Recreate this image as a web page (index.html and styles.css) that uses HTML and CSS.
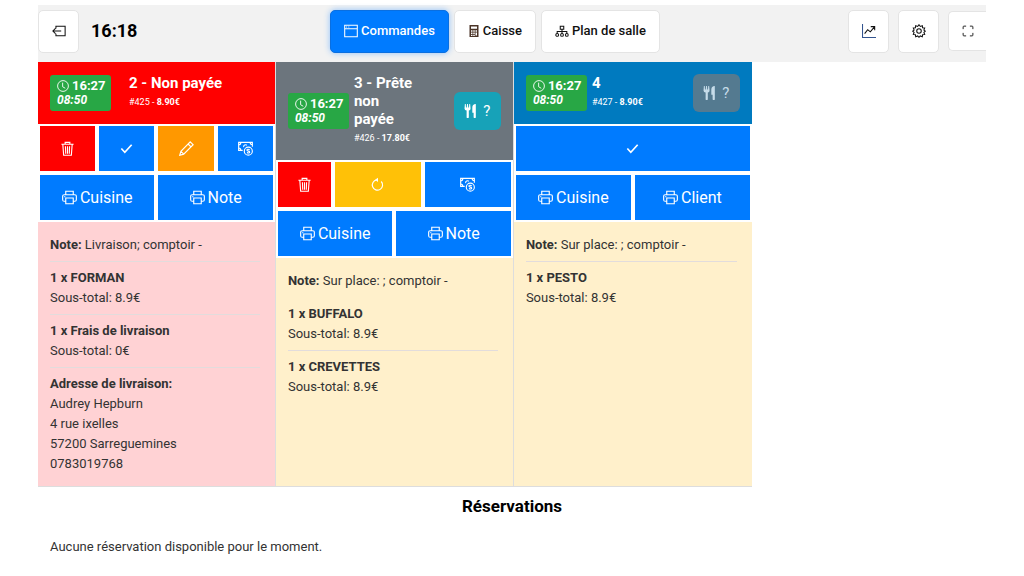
FILE: index.html
```html
<!DOCTYPE html>
<html lang="fr">
<head>
<meta charset="utf-8">
<meta name="viewport" content="width=device-width, initial-scale=1">
<title>Commandes</title>
<link rel="stylesheet" href="styles.css">
</head>
<body>
<svg class="sprite" aria-hidden="true">
  <symbol id="exit" viewBox="0 0 16 16"><path d="M4.500 5V2.500h10.500v11H4.500V11M10.500 8H1M4 5 1 8l3 3"/></symbol>
  <symbol id="window" viewBox="0 0 16 16"><path d="M.8 1.500h14.400v13H.8zM.8 5.500h14.400M2.500 3.500h1M5 3.500h1"/></symbol>
  <symbol id="calc" viewBox="0 0 16 16"><path d="M2 0h12v16H2zM4 2v3h8V2zM4 7v2h2V7zm3 0v2h2V7zm3 0v2h2V7zM4 10v2h2v-2zm3 0v2h2v-2zm3 0v4h2v-4zM4 13v1.500h2V13zm3 0v1.500h2V13z" fill="currentColor" fill-rule="evenodd" stroke="none"/></symbol>
  <symbol id="plan" viewBox="0 0 16 16"><path d="M6 2.500h4v3.500H6zM8 6v2.500M2.500 11V8.500h11V11M8 8.500V11"/><circle cx="2.500" cy="12.500" r="1.600"/><circle cx="8" cy="12.500" r="1.600"/><circle cx="13.500" cy="12.500" r="1.600"/></symbol>
  <symbol id="chart" viewBox="0 0 16 16"><path d="M.6 0v15.400H16" stroke="#33548f"/><path d="M3 11l3.500-4.500 3 2.500L14 3.500M10 3h4.500v4"/></symbol>
  <symbol id="gear" viewBox="0 0 16 16"><circle cx="8" cy="8" r="2.600"/><path d="m8 .8 1.500 2 2.300-.9.300 2.400 2.400.3-.9 2.300 1.600 1.300-1.600 1.500.9 2.200-2.400.3-.3 2.400-2.300-.9L8 15.200l-1.500-1.500-2.300.9-.3-2.400-2.400-.3.900-2.200L.8 8.200l1.600-1.300-.9-2.300 2.400-.3.300-2.400 2.300.9z"/></symbol>
  <symbol id="full" viewBox="0 0 16 16"><path d="M1.500 5.500v-3q0-1 1-1h3M10.500 1.500h3q1 0 1 1v3M14.500 10.500v3q0 1-1 1h-3M5.500 14.500h-3q-1 0-1-1v-3"/></symbol>
  <symbol id="clock" viewBox="0 0 16 16"><circle cx="8" cy="8" r="7.200"/><path d="M7.500 3.500V9l3.500 2"/></symbol>
  <symbol id="trash" viewBox="0 0 16 16"><path d="M1.500 3.500h13M5.500 3.500v-2h5v2M3 3.500l.9 11.700h8.200L13 3.500M5.800 5.500l.3 8M8 5.500v8M10.200 5.500l-.3 8"/></symbol>
  <symbol id="check" viewBox="0 0 16 16"><path d="m2.500 8 3.700 4 7.300-8" stroke-width="1.800"/></symbol>
  <symbol id="pencil" viewBox="0 0 16 16"><path d="m12 .9 3.100 3.100L5 14l-4.200 1.200L2 11zM9.700 3.200l3.100 3.100M2 11l3 3"/></symbol>
  <symbol id="cash" viewBox="0 0 16 16"><path d="M5 10H.7V1.500h14.600V6M.7 4Q3 4 3 1.500M13 1.500Q13 4 15.300 4M.7 7.500Q3 7.500 3 10M6 6.500a2.200 2.200 0 0 1 3.500-2"/><circle cx="11" cy="10.800" r="4.300"/><path d="M12.500 9.200q-3-1-3 .5 0 .8 1.500 1.100t1.500 1.200q0 1.300-3 .4"/></symbol>
  <symbol id="undo" viewBox="0 0 16 16"><path d="M12 4.800a5.500 5.500 0 1 1-5-1.700"/><path d="M8.500.8 5.500 3l3 2.400z" fill="currentColor" stroke="none"/></symbol>
  <symbol id="print" viewBox="0 0 16 16"><path d="M4 5V1.300h8V5M4 12H2.300Q.7 12 .7 10.500v-4Q.7 5 2.300 5h11.400q1.600 0 1.600 1.500v4q0 1.500-1.600 1.500H12M4 8.500h8v6.200H4zM2.500 7h1"/></symbol>
  <symbol id="fork" viewBox="0 0 16 16"><path d="M1 0h1l.3 4h.8L3.500 0h1l.4 4h.8L6 0h1l.5 5Q7.500 7 5.500 7.500V15q0 1-1.300 1T3 15V7.500Q.6 7 .6 5zM13.500 0v15q0 1-1.200 1T11 15v-5H9.500V4q0-4 4-4z" fill="currentColor" stroke="none"/></symbol>
</svg>
<div class="page">
  <header class="topbar">
    <div class="side">
      <button class="tool" aria-label="Quitter"><svg class="icon"><use href="#exit"/></svg></button>
      <time class="now">16:18</time>
    </div>
    <nav class="tabs">
      <button class="tab active"><svg class="icon"><use href="#window"/></svg>Commandes</button>
      <button class="tab"><svg class="icon calc"><use href="#calc"/></svg>Caisse</button>
      <button class="tab"><svg class="icon"><use href="#plan"/></svg>Plan de salle</button>
    </nav>
    <div class="side tools">
      <button class="tool" aria-label="Statistiques"><svg class="icon"><use href="#chart"/></svg></button>
      <button class="tool" aria-label="Réglages"><svg class="icon"><use href="#gear"/></svg></button>
      <button class="tool edge" aria-label="Plein écran"><svg class="icon"><use href="#full"/></svg></button>
    </div>
  </header>

  <main>
    <div class="orders">
      <article class="order">
        <header class="head unpaid">
          <div class="times"><span><svg class="icon"><use href="#clock"/></svg> 16:27</span><em>08:50</em></div>
          <div class="title wide"><h2>2 - Non payée</h2><p>#425 - <b>8.90€</b></p></div>
        </header>
        <div class="actions">
          <div class="row">
            <button class="act red" aria-label="Supprimer"><svg class="icon"><use href="#trash"/></svg></button>
            <button class="act" aria-label="Valider"><svg class="icon"><use href="#check"/></svg></button>
            <button class="act orange" aria-label="Modifier"><svg class="icon"><use href="#pencil"/></svg></button>
            <button class="act" aria-label="Encaisser"><svg class="icon"><use href="#cash"/></svg></button>
          </div>
          <div class="row">
            <button class="act"><svg class="icon"><use href="#print"/></svg>Cuisine</button>
            <button class="act"><svg class="icon"><use href="#print"/></svg>Note</button>
          </div>
        </div>
        <div class="body pink">
          <p><b>Note:</b> Livraison; comptoir -</p>
          <hr>
          <p><b>1 x FORMAN</b><br>Sous-total: 8.9€</p>
          <hr>
          <p><b>1 x Frais de livraison</b><br>Sous-total: 0€</p>
          <hr>
          <p><b>Adresse de livraison:</b><br>Audrey Hepburn<br>4 rue ixelles<br>57200 Sarreguemines<br>0783019768</p>
        </div>
      </article>

      <article class="order">
        <header class="head ready">
          <div class="times"><span><svg class="icon"><use href="#clock"/></svg> 16:27</span><em>08:50</em></div>
          <div class="title"><h2>3 - Prête non payée</h2><p>#426 - <b>17.80€</b></p></div>
          <button class="table-btn"><svg class="icon"><use href="#fork"/></svg>?</button>
        </header>
        <div class="actions">
          <div class="row">
            <button class="act red narrow" aria-label="Supprimer"><svg class="icon"><use href="#trash"/></svg></button>
            <button class="act yellow" aria-label="Rétablir"><svg class="icon"><use href="#undo"/></svg></button>
            <button class="act" aria-label="Encaisser"><svg class="icon"><use href="#cash"/></svg></button>
          </div>
          <div class="row">
            <button class="act"><svg class="icon"><use href="#print"/></svg>Cuisine</button>
            <button class="act"><svg class="icon"><use href="#print"/></svg>Note</button>
          </div>
        </div>
        <div class="body cream">
          <p><b>Note:</b> Sur place: ; comptoir -</p>
          <hr class="clear">
          <p><b>1 x BUFFALO</b><br>Sous-total: 8.9€</p>
          <hr>
          <p><b>1 x CREVETTES</b><br>Sous-total: 8.9€</p>
        </div>
      </article>

      <article class="order">
        <header class="head paid">
          <div class="times"><span><svg class="icon"><use href="#clock"/></svg> 16:27</span><em>08:50</em></div>
          <div class="title"><h2>4</h2><p>#427 - <b>8.90€</b></p></div>
          <button class="table-btn muted"><svg class="icon"><use href="#fork"/></svg>?</button>
        </header>
        <div class="actions">
          <div class="row">
            <button class="act" aria-label="Valider"><svg class="icon"><use href="#check"/></svg></button>
          </div>
          <div class="row">
            <button class="act"><svg class="icon"><use href="#print"/></svg>Cuisine</button>
            <button class="act"><svg class="icon"><use href="#print"/></svg>Client</button>
          </div>
        </div>
        <div class="body cream">
          <p><b>Note:</b> Sur place: ; comptoir -</p>
          <hr>
          <p><b>1 x PESTO</b><br>Sous-total: 8.9€</p>
        </div>
      </article>
    </div>

    <section class="bookings">
      <h1>Réservations</h1>
      <p>Aucune réservation disponible pour le moment.</p>
    </section>
  </main>
</div>
</body>
</html>
```
FILE: styles.css
```css
* { box-sizing: border-box; }
body {
  margin: 0;
  background: #fff;
  color: #333;
  font: 13px/20px Roboto, "Liberation Sans", sans-serif;
}
h1, h2, p { margin: 0; }
button { font: inherit; color: inherit; border: 0; cursor: pointer; }
.sprite { position: absolute; width: 0; height: 0; }
.icon {
  width: 14px;
  height: 14px;
  flex: none;
  fill: none;
  stroke: currentColor;
  stroke-width: 1.2;
}
.page { padding: 5px 38px 0; }

.topbar {
  display: grid;
  grid-template-columns: 1fr auto 1fr;
  align-items: center;
  height: 57px;
  padding-bottom: 5px;
  background: #f2f2f2;
  color: #111;
}
.side { display: flex; align-items: center; gap: 12px; }
.tools { justify-content: flex-end; gap: 9px; }
.tool, .tab {
  display: flex;
  align-items: center;
  justify-content: center;
  height: 43px;
  border: 1px solid #e4e4e4;
  border-radius: 5px;
  background: #fff;
}
.tool { width: 41px; padding: 0; }
.tool.edge { width: 38px; height: 40px; border-right: 0; border-radius: 5px 0 0 5px; }
.tool.edge .icon { width: 12px; height: 12px; }
.now { color: #000; font-size: 18px; font-weight: 700; }
.tabs { display: flex; gap: 5px; margin-right: 34px; }
.tab { gap: 3px; padding: 0 13px; font-size: 13px; font-weight: 500; }
.tab .calc { width: 12px; color: #4a3326; }
.tab.active {
  border-color: #0a6fe0;
  background: #007bff;
  color: #fff;
  box-shadow: 0 0 6px #8dc0fa;
}

.orders {
  display: grid;
  grid-template-columns: repeat(3, 1fr);
  width: 75.3%;
  border-bottom: 1px solid #ddd;
}
.order { display: flex; flex-direction: column; border-right: 1px solid #ddd; }
.order:last-child { border-right: 0; }
.head {
  display: flex;
  align-items: center;
  gap: 5px;
  padding: 12px;
  min-height: 62px;
  color: #fff;
}
.unpaid { background: #f00; }
.ready { padding: 12px; background: #6c757d; }
.paid { background: #007abf; }
.times {
  display: flex;
  flex-direction: column;
  flex: none;
  width: 61px;
  padding: 4px 7px;
  border-radius: 3px;
  background: #28a745;
  font-size: 13px;
  line-height: 14px;
  font-weight: 700;
  white-space: nowrap;
}
.times span { display: flex; align-items: center; gap: 3px; }
.times .icon { width: 12px; height: 12px; }
.times em { font-size: 12px; }
.title { flex: 1; padding-right: 28px; }
.title.wide { padding: 0 0 0 13px; }
.title h2 { font-size: 15px; line-height: 18px; font-weight: 700; }
.title p { font-size: 9px; line-height: 20px; }
.table-btn {
  display: flex;
  align-items: center;
  justify-content: center;
  gap: 5px;
  flex: none;
  width: 47px;
  height: 38px;
  padding: 0;
  border-radius: 6px;
  background: #17a2b8;
  font-size: 15px;
}
.table-btn.muted { background: #547a90; color: #c6dce9; }

.actions { display: flex; flex-direction: column; gap: 4px; padding: 2px; }
.row { display: flex; gap: 4px; }
.act {
  display: flex;
  flex: 1;
  align-items: center;
  justify-content: center;
  gap: 3px;
  height: 45px;
  padding: 0;
  background: #007bff;
  color: #fff;
  font-size: 16px;
}
.act .icon { width: 15px; height: 15px; }
.act.narrow { flex: 0 0 53px; }
.red { background: #f00; }
.orange { background: #ff9800; }
.yellow { background: #ffc107; }

.body { flex: 1; padding: 13px 15px 12px 12px; }
.pink { background: #ffd2d4; }
.cream { background: #fff0cb; }
hr { height: 1px; margin: 6px 0; border: 0; background: #e2dcdc; }
hr.clear { background: none; }

.bookings h1 {
  padding-top: 9px;
  color: #000;
  font-size: 17px;
  font-weight: 700;
  text-align: center;
}
.bookings p { padding: 21px 12px; }
```
